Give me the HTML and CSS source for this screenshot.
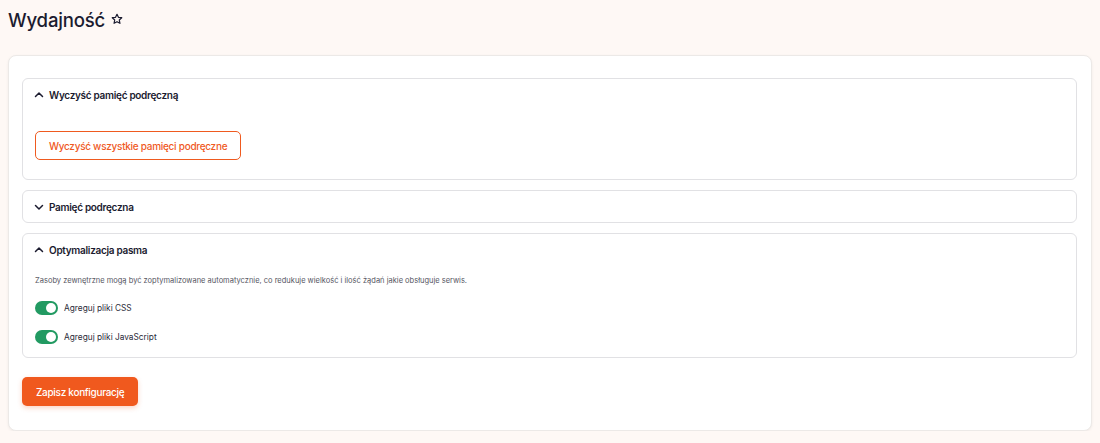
FILE: index.html
```html
<!DOCTYPE html>
<html lang="pl">
<head>
<meta charset="utf-8">
<title>Wydajność</title>
<link rel="stylesheet" href="styles.css">
</head>
<body>
<div class="page">
  <h1 class="title">Wydajność
    <svg class="star" width="12" height="12" viewBox="0 0 24 24" fill="none" stroke="#1b1b2f" stroke-width="2.4" stroke-linejoin="round"><path d="M12 2.5l2.9 6.1 6.6.8-4.9 4.6 1.3 6.6L12 17.3l-5.9 3.3 1.3-6.6-4.9-4.6 6.6-.8z"/></svg>
  </h1>
  <div class="card">
    <div class="section">
      <div class="sec-head">
        <svg class="chev" width="10" height="10" viewBox="0 0 10 10" fill="none" stroke="#1b1b2f" stroke-width="1.5" stroke-linecap="round" stroke-linejoin="round"><path d="M1.5 6.5L5 3l3.5 3.5"/></svg>
        <span>Wyczyść pamięć podręczną</span>
      </div>
      <div class="sec-body body-clear">
        <button class="btn-outline">Wyczyść wszystkie pamięci podręczne</button>
      </div>
    </div>
    <div class="section">
      <div class="sec-head">
        <svg class="chev" width="10" height="10" viewBox="0 0 10 10" fill="none" stroke="#1b1b2f" stroke-width="1.5" stroke-linecap="round" stroke-linejoin="round"><path d="M1.5 3.5L5 7l3.5-3.5"/></svg>
        <span>Pamięć podręczna</span>
      </div>
    </div>
    <div class="section">
      <div class="sec-head">
        <svg class="chev" width="10" height="10" viewBox="0 0 10 10" fill="none" stroke="#1b1b2f" stroke-width="1.5" stroke-linecap="round" stroke-linejoin="round"><path d="M1.5 6.5L5 3l3.5 3.5"/></svg>
        <span>Optymalizacja pasma</span>
      </div>
      <div class="sec-body body-opt">
        <p class="desc">Zasoby zewnętrzne mogą być zoptymalizowane automatycznie, co redukuje wielkość i ilość żądań jakie obsługuje serwis.</p>
        <label class="toggle-row"><span class="toggle"><span class="knob"></span></span>Agreguj pliki CSS</label>
        <label class="toggle-row"><span class="toggle"><span class="knob"></span></span>Agreguj pliki JavaScript</label>
      </div>
    </div>
    <div class="actions">
      <button class="btn-primary">Zapisz konfigurację</button>
    </div>
  </div>
</div>
</body>
</html>
```
FILE: styles.css
```css
* { box-sizing: border-box; }
html, body { margin: 0; padding: 0; }
body {
  background: #fef8f5;
  font-family: Inter, "Noto Sans", sans-serif;
  color: #1b1b2f;
}
.page { padding: 6px 8px 0 8px; }
.title {
  margin: 0;
  font-size: 18.6px;
  font-weight: 500;
  line-height: 28px;
  letter-spacing: -0.2px;
  display: flex;
  align-items: center;
  gap: 6px;
}
.star { margin-top: -2px; }
.card {
  margin-top: 21px;
  background: #fff;
  border: 1px solid #ece9e7;
  border-radius: 8px;
  box-shadow: 0 1px 3px rgba(0,0,0,0.06);
  padding: 22px 14px 24px 13px;
  display: flex;
  flex-direction: column;
  gap: 10px;
}
.section {
  border: 1px solid #e1e1e4;
  border-radius: 6px;
  background: #fff;
}
.sec-head {
  height: 31px;
  display: flex;
  align-items: center;
  gap: 5px;
  padding-left: 11px;
  font-size: 10px;
  font-weight: 600;
  letter-spacing: -0.3px;
}
.sec-body { padding: 0 12px; }
.body-clear { padding-top: 21px; padding-bottom: 19px; }
.btn-outline {
  display: block;
  height: 29px;
  padding: 0 13px;
  border: 1px solid #ef5a1f;
  border-radius: 5px;
  background: #fff;
  color: #ef5a1f;
  font-family: inherit;
  font-size: 10px;
  font-weight: 500;
  letter-spacing: -0.28px;
}
.body-opt { padding-top: 10px; padding-bottom: 12px; }
.desc {
  margin: 0 0 13px 0;
  font-size: 7.5px;
  color: #55555f;
  line-height: 12px;
}
.toggle-row {
  display: flex;
  align-items: center;
  gap: 6px;
  font-size: 8.3px;
  color: #2a2a38;
  height: 16px;
  margin-bottom: 13px;
}
.toggle-row:last-child { margin-bottom: 0; }
.toggle {
  width: 23px;
  height: 14px;
  border-radius: 7px;
  background: #229a62;
  display: flex;
  align-items: center;
  justify-content: flex-end;
  padding-right: 2px;
}
.knob {
  width: 10px;
  height: 10px;
  border-radius: 50%;
  background: #fff;
}
.actions { padding-top: 9px; }
.btn-primary {
  display: block;
  height: 29px;
  padding: 0 14px;
  border: none;
  border-radius: 5px;
  background: #f0591e;
  color: #fff;
  font-family: inherit;
  font-size: 10px;
  font-weight: 500;
  letter-spacing: -0.3px;
  box-shadow: 0 2px 5px rgba(240,89,30,0.25);
}
```
